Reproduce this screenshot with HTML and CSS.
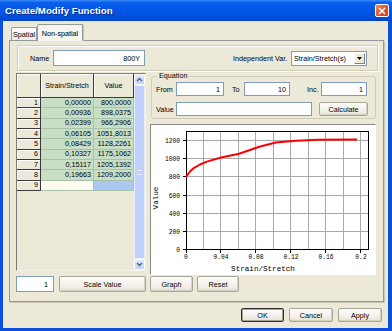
FILE: index.html
```html
<!DOCTYPE html>
<html lang="en">

<head>
  <meta charset="UTF-8">
  <title>Create/Modify Function</title>
  <link rel="stylesheet" href="styles.css">
</head>

<body>
  <div class="window">
    <div class="titlebar">
      <span class="title">Create/Modify Function</span>
      <span class="close">
        <svg width="8" height="8" viewBox="0 0 8 8">
          <path d="M1 1L7 7M7 1L1 7" stroke="#fff" stroke-width="1.6" />
        </svg>
      </span>
    </div>

    <div class="client">
      <div class="tabs">
        <div class="tab">Spatial</div>
        <div class="tab active">Non-spatial</div>
      </div>

      <div class="panel">
        <div class="name-frame">
          <span class="lbl name-lbl">Name</span>
          <div class="input name-input">800Y</div>
          <span class="lbl var-lbl">Independent Var.</span>
          <div class="select">
            <span class="select-text">Strain/Stretch(s)</span>
            <span class="drop">
              <svg width="5" height="3" viewBox="0 0 5 3"><path d="M0 0H5L2.5 3Z" fill="#000" /></svg>
            </span>
          </div>
        </div>

        <div class="middle">
          <div class="grid">
            <div class="sheet">
              <div class="hdr"></div>
              <div class="hdr col">Strain/Stretch</div>
              <div class="hdr col">Value</div>

              <div class="hdr num">1</div><div class="cell">0,00000</div><div class="cell">800,0000</div>
              <div class="hdr num">2</div><div class="cell">0,00936</div><div class="cell">898,0375</div>
              <div class="hdr num">3</div><div class="cell">0,02399</div><div class="cell">966,2906</div>
              <div class="hdr num">4</div><div class="cell">0,06105</div><div class="cell">1051,8013</div>
              <div class="hdr num">5</div><div class="cell">0,08429</div><div class="cell">1128,2261</div>
              <div class="hdr num">6</div><div class="cell">0,10327</div><div class="cell">1175,1062</div>
              <div class="hdr num">7</div><div class="cell">0,15117</div><div class="cell">1205,1392</div>
              <div class="hdr num">8</div><div class="cell">0,19663</div><div class="cell">1209,2000</div>
              <div class="hdr num">9</div><div class="cell blank"></div><div class="cell picked"></div>
            </div>
            <div class="vscroll">
              <div class="sbtn">
                <svg width="7" height="5" viewBox="0 0 7 5"><path d="M1 4L3.5 1.5L6 4" stroke="#4d6185" stroke-width="1.4" fill="none" /></svg>
              </div>
              <div class="thumb"><span class="grip"></span></div>
              <div class="sbtn">
                <svg width="7" height="5" viewBox="0 0 7 5"><path d="M1 1L3.5 3.5L6 1" stroke="#4d6185" stroke-width="1.4" fill="none" /></svg>
              </div>
            </div>
          </div>

          <div class="side">
            <fieldset class="equation">
              <legend>Equation</legend>
              <div class="eq-row">
                <span class="lbl from-lbl">From</span>
                <div class="input eq-input">1</div>
                <span class="lbl to-lbl">To</span>
                <div class="input eq-input short">10</div>
                <span class="lbl inc-lbl">Inc.</span>
                <div class="input eq-input short">1</div>
              </div>
              <div class="eq-row">
                <span class="lbl from-lbl">Value</span>
                <div class="input value-input"></div>
                <button class="btn calc">Calculate</button>
              </div>
            </fieldset>

            <div class="chart">
              <svg width="224" height="149" viewBox="0 0 224 149">
                <g stroke="#a8a8a8" stroke-width="1">
                  <path d="M52.5 6V125M69.5 6V125M87.5 6V125M104.5 6V125M122.5 6V125M139.5 6V125M157.5 6V125M174.5 6V125M192.5 6V125M209.5 6V125" />
                  <path d="M35 106.5H218M35 88.5H218M35 70.5H218M35 51.5H218M35 33.5H218M35 15.5H218" />
                </g>
                <g stroke="#000" stroke-width="1">
                  <rect x="35.5" y="6.5" width="182" height="118" fill="none" />
                  <path d="M32 124.5H35M32 106.5H35M32 88.5H35M32 70.5H35M32 51.5H35M32 33.5H35M32 15.5H35" />
                  <path d="M35.5 125V128M69.5 125V128M104.5 125V128M139.5 125V128M174.5 125V128M209.5 125V128" />
                </g>
                <g class="ticks" text-anchor="end">
                  <text x="29" y="127">0</text>
                  <text x="29" y="109">200</text>
                  <text x="29" y="91">400</text>
                  <text x="29" y="73">600</text>
                  <text x="29" y="54">800</text>
                  <text x="29" y="36">1000</text>
                  <text x="29" y="18">1200</text>
                </g>
                <g class="ticks" text-anchor="middle">
                  <text x="35" y="134">0</text>
                  <text x="70" y="134">0.04</text>
                  <text x="105" y="134">0.08</text>
                  <text x="140" y="134">0.12</text>
                  <text x="175" y="134">0.16</text>
                  <text x="210" y="134">0.2</text>
                </g>
                <text class="axis" x="112" y="146" text-anchor="middle">Strain/Stretch</text>
                <text class="axis" x="7" y="73" text-anchor="middle" transform="rotate(-90 7 73)">Value</text>
                <polyline fill="none" stroke="#ff0000" stroke-width="2" stroke-linejoin="round"
                  points="35,51.8 39,46.5 43.1,42.8 49,39.5 55.9,36.6 70,32.5 88.1,28.8 108.3,21.8 124.8,17.5 145,15.8 166.5,14.7 206.1,14.4" />
              </svg>
            </div>
          </div>
        </div>

        <div class="tools">
          <div class="input scale-input">1</div>
          <button class="btn scale-btn">Scale Value</button>
          <button class="btn graph-btn">Graph</button>
          <button class="btn reset-btn">Reset</button>
        </div>
      </div>

      <div class="actions">
        <button class="btn act default">OK</button>
        <button class="btn act">Cancel</button>
        <button class="btn act">Apply</button>
      </div>
    </div>
  </div>
</body>

</html>
```

FILE: styles.css
```css
html,
body {
  margin: 0;
  padding: 0;
}

body {
  font-family: "Liberation Sans", Arial, sans-serif;
  font-size: 7.2px;
  color: #000;
}

* {
  box-sizing: border-box;
}

.window {
  width: 392px;
  height: 331px;
  display: flex;
  flex-direction: column;
  background: #0a4fdc;
}

.titlebar {
  height: 21px;
  display: flex;
  align-items: center;
  justify-content: space-between;
  padding: 0 3px 0 5px;
  background: linear-gradient(to bottom, #3d8dfb 0%, #0a5fec 12%, #0256e6 50%, #004ed9 85%, #0043c4 100%);
}

.title {
  color: #fff;
  font-weight: bold;
  font-size: 9.7px;
  text-shadow: 1px 1px 0 #0a2a8a;
}

.close {
  width: 14px;
  height: 13px;
  display: flex;
  align-items: center;
  justify-content: center;
  border: 1px solid #fff;
  border-radius: 2px;
  background: linear-gradient(135deg, #f08a66 0%, #e0512a 55%, #c8401c 100%);
}

.client {
  flex: 1;
  margin: 0 4px 3px 3px;
  background: #ece9d8;
  display: flex;
  flex-direction: column;
}

/* tabs */
.tabs {
  height: 19px;
  display: flex;
  align-items: flex-end;
  padding-left: 8px;
}

.tab {
  height: 13px;
  padding: 0 2px;
  width: 26px;
  display: flex;
  align-items: center;
  justify-content: center;
  border: 1px solid #919b9c;
  border-bottom: none;
  border-radius: 2px 2px 0 0;
  background: linear-gradient(to bottom, #fff, #ecebe5);
}

.tab.active {
  width: 46px;
  height: 17px;
  margin-bottom: -1px;
  position: relative;
  z-index: 1;
  background: #f6f5ef;
  box-shadow: 1px 0 0 #c6c3b4;
}

.panel {
  margin-left: 6px;
  width: 375px;
  height: 262px;
  border: 1px solid #919b9c;
  box-shadow: 1px 1px 0 #c9c6b6;
  background: #ece9d8;
  padding: 4px 0 0 6px;
}

.lbl {
  white-space: nowrap;
}

.input {
  background: #fff;
  border: 1px solid #7f9db9;
  text-align: right;
  padding-right: 3px;
  display: flex;
  align-items: center;
  justify-content: flex-end;
}

/* name row */
.name-frame {
  margin-left: 1px;
  width: 361px;
  height: 26px;
  border: 1px solid #d0ccb8;
  box-shadow: inset 1px 1px 0 #fff, 1px 1px 0 #fff;
  display: flex;
  align-items: center;
  padding-left: 12px;
}

.name-lbl {
  width: 23px;
}

.name-input {
  width: 92px;
  height: 16px;
  padding-right: 4px;
}

.var-lbl {
  margin-left: 88px;
  width: 58px;
}

.select {
  width: 76px;
  height: 15px;
  background: #fff;
  border: 1px solid #7f9db9;
  display: flex;
  align-items: center;
  justify-content: space-between;
  padding: 0 1px 0 2px;
}

.drop {
  width: 11px;
  height: 11px;
  display: flex;
  align-items: center;
  justify-content: center;
  background: #ece9d8;
  border: 1px solid;
  border-color: #fff #808080 #808080 #fff;
}

/* grid + side */
.middle {
  margin-top: 2px;
  display: flex;
  gap: 4px;
}

.grid {
  width: 130px;
  height: 198px;
  border: 1px solid;
  border-color: #7a7a7a #f4f2e8 #f4f2e8 #7a7a7a;
  display: flex;
  background: #ece9d8;
}

.sheet {
  width: 117px;
  display: grid;
  grid-template-columns: 24px 53px 40px;
  grid-template-rows: 24px;
  grid-auto-rows: 10.33px;
  align-content: start;
}

.hdr {
  background: #ece9d8;
  border-right: 1px solid #3a3a3a;
  border-bottom: 1px solid #3a3a3a;
  box-shadow: inset 1px 1px 0 #fff;
  display: flex;
  align-items: center;
  line-height: 8px;
}

.hdr.col {
  justify-content: center;
}

.hdr.num {
  justify-content: flex-end;
  padding-right: 2px;
}

.cell {
  background: #c8dfc6;
  border-right: 1px solid #a9c2a7;
  border-bottom: 1px solid #a9c2a7;
  display: flex;
  align-items: center;
  justify-content: flex-end;
  padding-right: 2px;
  line-height: 8px;
}

.cell.blank {
  background: #fffbf0;
}

.cell.picked {
  background: #a9c9f3;
}

.vscroll {
  width: 11px;
  display: flex;
  flex-direction: column;
}

.sbtn {
  height: 11px;
  display: flex;
  align-items: center;
  justify-content: center;
  background: linear-gradient(to bottom, #dfe8fe, #c1d3fb);
  border: 1px solid #fff;
  border-radius: 2px;
}

.thumb {
  flex: 1;
  background: #bfd1fa;
  border: 1px solid #e8eefe;
  border-radius: 2px;
  display: flex;
  align-items: center;
  justify-content: center;
}

.grip {
  width: 5px;
  height: 5px;
  border-top: 1px solid #e9efff;
  border-bottom: 1px solid #e9efff;
}

.side {
  width: 226px;
  display: flex;
  flex-direction: column;
}

.equation {
  margin: 0 0 0 1px;
  width: 225px;
  height: 46px;
  border: 1px solid #d0ccb8;
  border-radius: 3px;
  padding: 3px 0 0 4px;
}

.equation legend {
  padding: 0 2px;
  margin-left: 1px;
  line-height: 6px;
}

.eq-row {
  display: flex;
  align-items: center;
  height: 14px;
}

.eq-row + .eq-row {
  margin-top: 6px;
}

.from-lbl {
  width: 20px;
}

.eq-input {
  width: 48px;
  height: 14px;
}

.eq-input.short {
  width: 46px;
}

.to-lbl {
  margin-left: 8px;
  width: 12px;
}

.inc-lbl {
  margin-left: 17px;
  width: 14px;
}

.value-input {
  width: 136px;
  height: 14px;
}

.btn {
  font-family: inherit;
  font-size: 7.2px;
  color: #000;
  padding: 0;
  background: linear-gradient(to bottom, #fdfdfb, #f0eee6 70%, #e2dfd3);
  border: 1px solid #a9a699;
  border-radius: 2px;
  box-shadow: inset -1px -1px 0 #d6d2c4;
}

.calc {
  margin-left: 7px;
  width: 49px;
  height: 14px;
}

.chart {
  margin-top: 5px;
  width: 226px;
  height: 151px;
  background: #fff;
  border: 1px solid;
  border-color: #8a8a8a #fff #fff #8a8a8a;
}

.chart svg {
  display: block;
}

.ticks {
  font-family: "Liberation Mono", monospace;
  font-size: 6.3px;
}

.axis {
  font-family: "Liberation Mono", monospace;
  font-size: 7.6px;
}

/* bottom rows */
.tools {
  margin-top: 1px;
  display: flex;
  height: 16px;
}

.scale-input {
  width: 38px;
  height: 16px;
  padding-right: 5px;
}

.scale-btn {
  margin-left: 5px;
  width: 87px;
}

.graph-btn {
  margin-left: 4px;
  width: 43px;
}

.reset-btn {
  margin-left: 4px;
  width: 42px;
}

.actions {
  margin-top: 6px;
  display: flex;
  justify-content: flex-end;
  gap: 5px;
  padding-right: 6px;
}

.act {
  width: 44px;
  height: 14px;
}

.act.default {
  width: 43px;
  border-color: #303030;
  box-shadow: inset 0 0 0 1px #a5a295;
}
```
